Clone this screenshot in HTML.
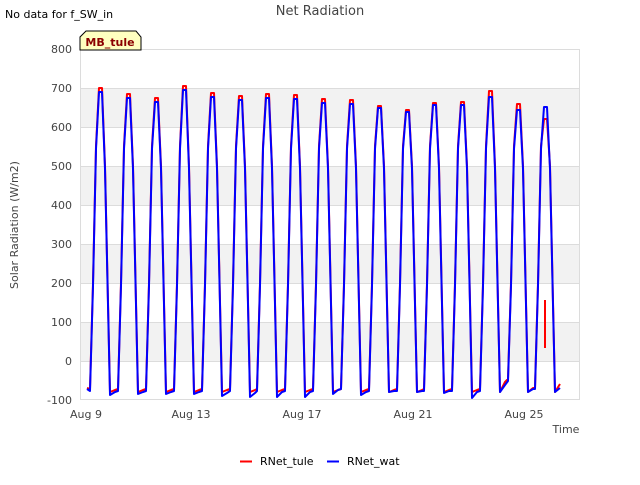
<!DOCTYPE html>
<html><head><style>
body{margin:0;width:640px;height:480px;background:#fff;overflow:hidden;font-family:"Liberation Sans","DejaVu Sans",sans-serif;}
</style></head><body>
<svg width="640" height="480" xmlns="http://www.w3.org/2000/svg" font-family="'DejaVu Sans','Liberation Sans',sans-serif">
<rect x="80" y="49" width="500" height="351" fill="#fff"/>
<rect x="80" y="88" width="500" height="39" fill="#f2f2f2"/>
<rect x="80" y="166" width="500" height="39" fill="#f2f2f2"/>
<rect x="80" y="244" width="500" height="39" fill="#f2f2f2"/>
<rect x="80" y="322" width="500" height="39" fill="#f2f2f2"/>
<g stroke="#dcdcdc" stroke-width="1">
<line x1="80" y1="49.5" x2="580" y2="49.5"/><line x1="80" y1="88.5" x2="580" y2="88.5"/>
<line x1="80" y1="127.5" x2="580" y2="127.5"/><line x1="80" y1="166.5" x2="580" y2="166.5"/>
<line x1="80" y1="205.5" x2="580" y2="205.5"/><line x1="80" y1="244.5" x2="580" y2="244.5"/>
<line x1="80" y1="283.5" x2="580" y2="283.5"/><line x1="80" y1="322.5" x2="580" y2="322.5"/>
<line x1="80" y1="361.5" x2="580" y2="361.5"/><line x1="80" y1="399.5" x2="580" y2="399.5"/>
<line x1="80.5" y1="49" x2="80.5" y2="400"/><line x1="579.5" y1="49" x2="579.5" y2="400"/>
</g>
<g font-size="11" fill="#444" text-anchor="end">
<text x="72" y="53">800</text><text x="72" y="92">700</text><text x="72" y="131">600</text>
<text x="72" y="170">500</text><text x="72" y="209">400</text><text x="72" y="248">300</text>
<text x="72" y="287">200</text><text x="72" y="326">100</text><text x="72" y="365">0</text>
<text x="72" y="404">-100</text>
</g>
<g font-size="11" fill="#444" text-anchor="middle">
<text x="86" y="418">Aug 9</text><text x="191" y="418">Aug 13</text><text x="302" y="418">Aug 17</text>
<text x="413" y="418">Aug 21</text><text x="524" y="418">Aug 25</text>
</g>
<text x="566" y="433" font-size="11" fill="#444" text-anchor="middle">Time</text>
<text x="18" y="225" font-size="11" fill="#444" text-anchor="middle" transform="rotate(-90 18 225)">Solar Radiation (W/m2)</text>
<text x="320" y="15" font-size="13" fill="#444" text-anchor="middle">Net Radiation</text>
<text x="5" y="18" font-size="11" fill="#000">No data for f_SW_in</text>
<path d="M80,50 L80,37 L86,31 L136,31 L141,37 L141,50 Z" fill="#ffffc0" stroke="#000" stroke-width="1"/>
<text x="110" y="46" font-size="11" font-weight="bold" fill="#8b0000" text-anchor="middle">MB_tule</text>
<path fill="none" stroke="#f00" stroke-width="2" stroke-linejoin="round" d="M87,388 L90,389 93,283 96,146 99,88 102,88 105,166 108,302 110,392 115,390 L118,389 121,283 124,146 127,94 130,94 133,166 136,302 138,392 143,390 L146,389 149,283 152,146 155,98 158,98 161,166 164,302 166,392 171,390 L174,389 177,283 180,146 183,86 186,86 189,166 192,302 194,392 199,390 L202,389 205,283 208,146 211,93 214,93 217,166 220,302 222,392 227,390 L230,389 233,283 236,146 239,96 242,96 245,166 248,302 250,392 255,390 L257,389 260,283 263,146 266,94 269,94 272,166 275,302 277,392 282,390 L285,389 288,283 291,146 294,95 297,95 300,166 303,302 305,392 310,390 L313,389 316,283 319,146 322,99 325,99 328,166 331,302 333,392 338,390 L341,389 344,283 347,146 350,100 353,100 356,166 359,302 361,392 366,390 L369,389 372,283 375,146 378,106 381,106 384,166 387,302 389,392 394,390 L397,389 400,283 403,146 406,110 409,110 412,166 415,302 417,392 422,390 L424,389 427,283 430,146 433,103 436,103 439,166 442,302 444,392 449,390 L452,389 455,283 458,146 461,102 464,102 467,166 470,302 472,392 477,390 L480,389 483,283 486,146 489,91 492,91 495,166 498,302 500,392 505,382 L508,379 511,283 514,146 517,104 520,104 523,166 526,302 528,392 533,388 L535,388 538,283 541,146 544,119 547,119 550,166 553,302 555,392 560,384"/>
<line x1="545" y1="300" x2="545" y2="348" stroke="#f00" stroke-width="2"/>
<path fill="none" stroke="#00f" stroke-width="2" stroke-linejoin="round" d="M87,389 L90,391 93,286 96,149 99,92 102,92 105,169 108,305 110,395 115,392 L118,391 121,286 124,149 127,98 130,98 133,169 136,305 138,394 143,392 L146,391 149,286 152,149 155,102 158,102 161,169 164,305 166,394 171,392 L174,391 177,286 180,149 183,90 186,90 189,169 192,305 194,394 199,392 L202,391 205,286 208,149 211,97 214,97 217,169 220,305 222,396 227,393 L230,391 233,286 236,149 239,100 242,100 245,169 248,305 250,397 255,393 L257,391 260,286 263,149 266,98 269,98 272,169 275,305 277,397 282,392 L285,391 288,286 291,149 294,99 297,99 300,169 303,305 305,397 310,392 L313,391 316,286 319,149 322,103 325,103 328,169 331,305 333,394 338,390 L341,389 344,286 347,149 350,104 353,104 356,169 359,305 361,395 366,392 L369,391 372,286 375,149 378,108 381,108 384,169 387,305 389,392 394,391 L397,391 400,286 403,149 406,112 409,112 412,169 415,305 417,392 422,391 L424,391 427,286 430,149 433,105 436,105 439,169 442,305 444,393 449,391 L452,391 455,286 458,149 461,105 464,105 467,169 470,305 472,398 477,392 L480,391 483,286 486,149 489,97 492,97 495,169 498,305 500,392 505,385 L508,381 511,286 514,149 517,110 520,110 523,169 526,305 528,392 533,389 L535,389 538,286 541,149 544,107 547,107 550,169 553,305 555,392 560,388"/>
<line x1="240" y1="461.5" x2="252" y2="461.5" stroke="#f00" stroke-width="2"/>
<text x="260" y="465" font-size="11" fill="#000">RNet_tule</text>
<line x1="327" y1="461.5" x2="339" y2="461.5" stroke="#00f" stroke-width="2"/>
<text x="347" y="465" font-size="11" fill="#000">RNet_wat</text>
</svg>
</body></html>
